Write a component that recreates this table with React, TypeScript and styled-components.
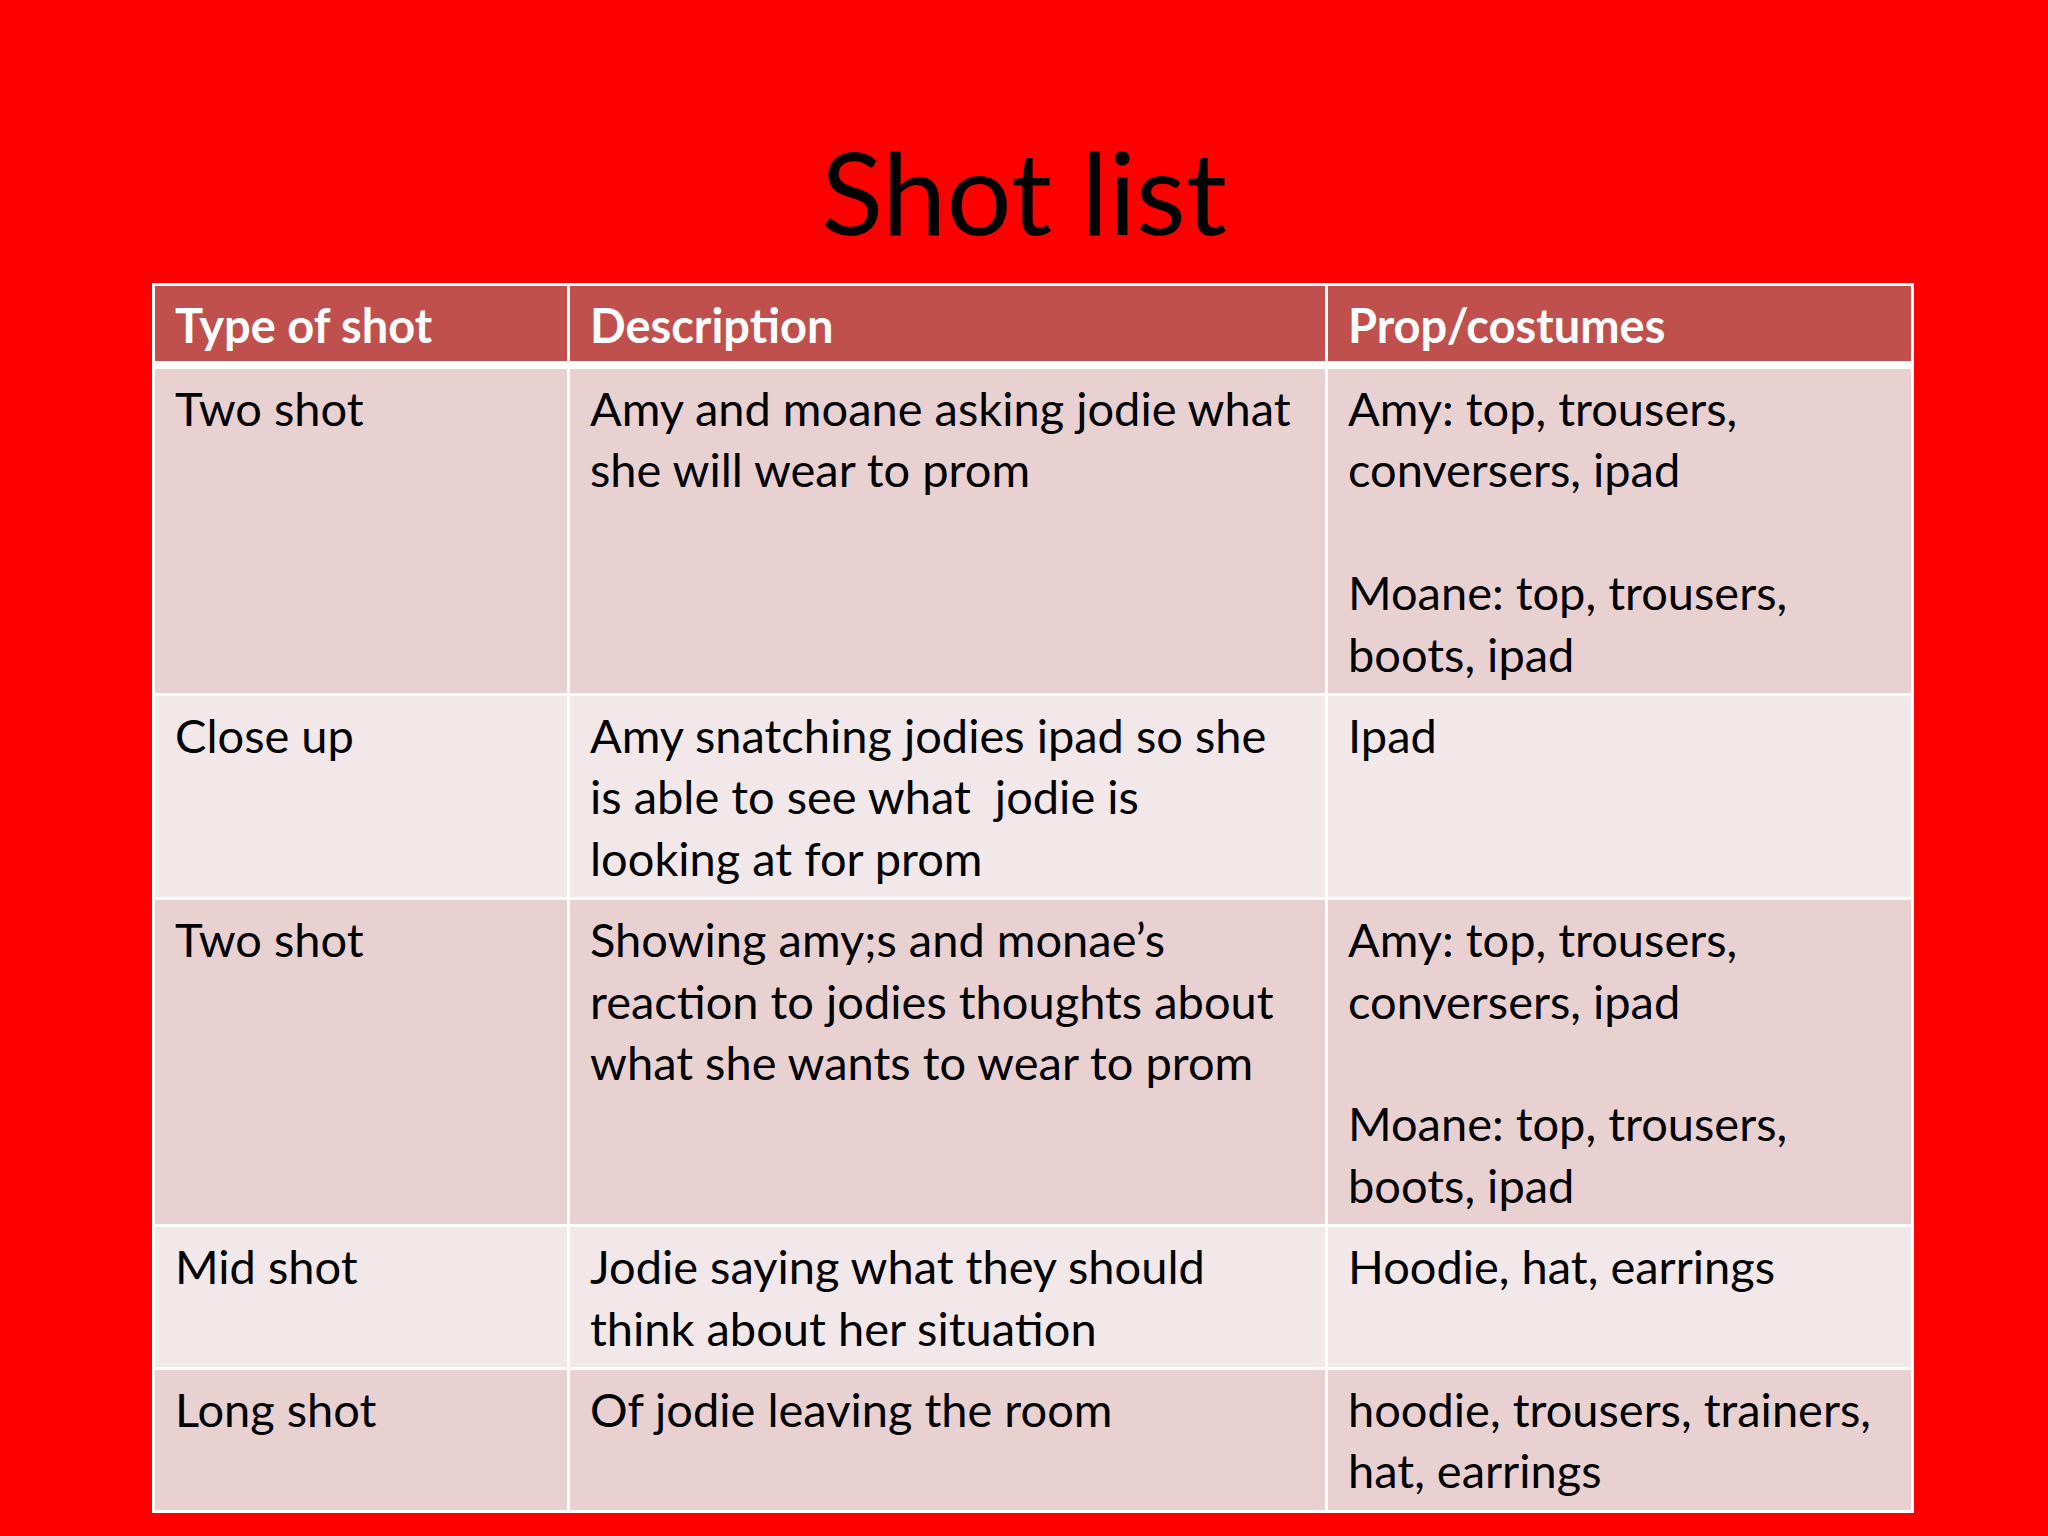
import styled, { createGlobalStyle } from "styled-components";

const GlobalStyle = createGlobalStyle`
  html, body {
    margin: 0;
    padding: 0;
    background: #ff0000;
  }
  body {
    font-family: Lato, "Open Sans", sans-serif;
  }
`;

// Slide layout
const Slide = styled.div`
  width: 2048px;
  height: 1536px;
  background: #ff0000;
  display: flex;
  flex-direction: column;
  padding-top: 131px;
  box-sizing: border-box;
`;

const Title = styled.h1`
  margin: 0 0 34px 0;
  font-family: Lato, sans-serif;
  font-weight: 400;
  font-size: 115px;
  line-height: 118px;
  color: #000;
  text-align: center;
`;

const Table = styled.table`
  margin-left: 152px;
  width: 1762px;
  border-collapse: collapse;
  table-layout: fixed;
  border: 3px solid #fff;
`;

interface CellProps {
  $width?: number;
}

const HeadCell = styled.th<CellProps>`
  width: ${(p) => (p.$width ? `${p.$width}px` : "auto")};
  background: #c0504d;
  color: #fff;
  font-weight: 700;
  font-size: 47px;
  line-height: 61px;
  text-align: left;
  padding: 9px 20px 5px 20px;
  border-left: 3px solid #fff;
  border-right: 3px solid #fff;
  border-bottom: 8px solid #fff;
`;

interface RowProps {
  $band: boolean;
}

const Row = styled.tr<RowProps>`
  background: ${(p) => (p.$band ? "#e9d1d2" : "#f3e8e9")};
`;

const Cell = styled.td`
  vertical-align: top;
  font-size: 47px;
  line-height: 61.4px;
  color: #000;
  padding: 9px 20px 8px 20px;
  border: 3px solid #fff;
`;

const Line = styled.div`
  white-space: pre;
  min-height: 61.4px;
`;

type Shot = {
  type: string;
  description: string[];
  props: string[];
};

const shots: Shot[] = [
  {
    type: "Two shot",
    description: ["Amy and moane asking jodie what", "she will wear to prom"],
    props: [
      "Amy: top, trousers,",
      "conversers, ipad",
      "",
      "Moane: top, trousers,",
      "boots, ipad",
    ],
  },
  {
    type: "Close up",
    description: [
      "Amy snatching jodies ipad so she",
      "is able to see what  jodie is",
      "looking at for prom",
    ],
    props: ["Ipad"],
  },
  {
    type: "Two shot",
    description: [
      "Showing amy;s and monae\u2019s",
      "reaction to jodies thoughts about",
      "what she wants to wear to prom",
    ],
    props: [
      "Amy: top, trousers,",
      "conversers, ipad",
      "",
      "Moane: top, trousers,",
      "boots, ipad",
    ],
  },
  {
    type: "Mid shot",
    description: ["Jodie saying what they should", "think about her situation"],
    props: ["Hoodie, hat, earrings"],
  },
  {
    type: "Long shot",
    description: ["Of jodie leaving the room"],
    props: ["hoodie, trousers, trainers,", "hat, earrings"],
  },
];

const Lines = ({ lines }: { lines: string[] }) => (
  <>
    {lines.map((l, i) => (
      <Line key={i}>{l}</Line>
    ))}
  </>
);

export default function App() {
  return (
    <>
      <GlobalStyle />
      <Slide>
        <Title>Shot list</Title>
        <Table>
          <thead>
            <tr>
              {/* content widths: column width minus padding and border */}
              <HeadCell $width={372}>Type of shot</HeadCell>
              <HeadCell $width={715}>Description</HeadCell>
              <HeadCell>Prop/costumes</HeadCell>
            </tr>
          </thead>
          <tbody>
            {shots.map((s, i) => (
              <Row key={i} $band={i % 2 === 0}>
                <Cell>
                  <Line>{s.type}</Line>
                </Cell>
                <Cell>
                  <Lines lines={s.description} />
                </Cell>
                <Cell>
                  <Lines lines={s.props} />
                </Cell>
              </Row>
            ))}
          </tbody>
        </Table>
      </Slide>
    </>
  );
}
